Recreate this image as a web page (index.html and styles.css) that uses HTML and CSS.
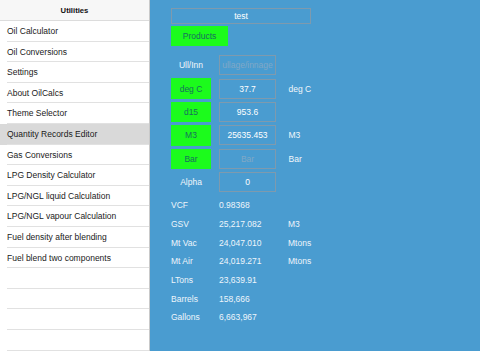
FILE: index.html
```html
<!DOCTYPE html>
<html lang="en">
<head>
    <meta charset="UTF-8">
    <title>OilCalcs - Quantity Records Editor</title>
    <link rel="stylesheet" href="styles.css">
</head>
<body>
    <div class="sidebar">
        <div class="side-head">Utilities</div>
        <div class="side-item">Oil Calculator</div>
        <div class="side-item">Oil Conversions</div>
        <div class="side-item">Settings</div>
        <div class="side-item">About OilCalcs</div>
        <div class="side-item">Theme Selector</div>
        <div class="side-item selected">Quantity Records Editor</div>
        <div class="side-item">Gas Conversions</div>
        <div class="side-item">LPG Density Calculator</div>
        <div class="side-item">LPG/NGL liquid Calculation</div>
        <div class="side-item">LPG/NGL vapour Calculation</div>
        <div class="side-item">Fuel density after blending</div>
        <div class="side-item">Fuel blend two components</div>
        <div class="side-item"></div>
        <div class="side-item"></div>
        <div class="side-item"></div>
        <div class="side-item"></div>
    </div>
    <div class="main">
        <input type="text" class="title-field" value="test" readonly>
        <button class="green products">Products</button>

        <div class="form">
            <div class="row">
                <span class="label">Ull/Inn</span>
                <input type="text" class="field" placeholder="ullage/innage" readonly>
            </div>
            <div class="row">
                <button class="green">deg C</button>
                <input type="text" class="field" value="37.7" readonly>
                <span class="unit">deg C</span>
            </div>
            <div class="row">
                <button class="green">d15</button>
                <input type="text" class="field" value="953.6" readonly>
            </div>
            <div class="row">
                <button class="green">M3</button>
                <input type="text" class="field" value="25635.453" readonly>
                <span class="unit">M3</span>
            </div>
            <div class="row">
                <button class="green">Bar</button>
                <input type="text" class="field" placeholder="Bar" readonly>
                <span class="unit">Bar</span>
            </div>
            <div class="row">
                <span class="label">Alpha</span>
                <input type="text" class="field" value="0" readonly>
            </div>
        </div>

        <div class="results">
            <div class="res"><span class="res-name">VCF</span><span class="res-val">0.98368</span></div>
            <div class="res"><span class="res-name">GSV</span><span class="res-val">25,217.082</span><span>M3</span></div>
            <div class="res"><span class="res-name">Mt Vac</span><span class="res-val">24,047.010</span><span>Mtons</span></div>
            <div class="res"><span class="res-name">Mt Air</span><span class="res-val">24,019.271</span><span>Mtons</span></div>
            <div class="res"><span class="res-name">LTons</span><span class="res-val">23,639.91</span></div>
            <div class="res"><span class="res-name">Barrels</span><span class="res-val">158,666</span></div>
            <div class="res"><span class="res-name">Gallons</span><span class="res-val">6,663,967</span></div>
        </div>
    </div>
</body>
</html>
```

FILE: styles.css
```css
body
{
    margin: 0;
    height: 351px;
    display: flex;
    overflow: hidden;
    font-family: "Liberation Sans", Arial, sans-serif;
    font-size: 8.5px;
}
.sidebar
{
    width: 149px;
    background: #fff;
    border-right: 1px solid #c9c9c9;
    flex-shrink: 0;
}
.side-head
{
    height: 20px;
    line-height: 21px;
    background: #f7f7f7;
    border-bottom: 1px solid #dcdcdc;
    text-align: center;
    font-weight: bold;
    font-size: 7.7px;
    color: #111;
}
.side-item
{
    height: 20.6px;
    box-sizing: border-box;
    line-height: 20px;
    padding-left: 7px;
    color: #1a1a1a;
    background: #fff;
    background-image: linear-gradient(#e1e1e1, #e1e1e1);
    background-size: calc(100% - 7px) 1px;
    background-position: 7px 100%;
    background-repeat: no-repeat;
}
.side-item.selected
{
    background-color: #d9d9d9;
}
.main
{
    flex: 1;
    background: #4a9cd0;
    padding: 8px 0 0 21px;
    display: flex;
    flex-direction: column;
    align-items: flex-start;
}
input
{
    font-family: inherit;
    font-size: 8.5px;
    background: transparent;
    color: #fff;
    text-align: center;
    border: 1px solid #7e9aae;
    box-sizing: border-box;
    padding: 0;
    outline: none;
}
input::placeholder
{
    color: #80a8c6;
}
.title-field
{
    width: 140px;
    height: 16px;
}
.green
{
    font-family: inherit;
    font-size: 8.5px;
    background: #1cfb1c;
    color: #17705f;
    border: none;
    padding: 0;
    width: 40px;
    height: 20.5px;
}
.products
{
    margin-top: 1.5px;
    width: 57px;
}
.form
{
    margin-top: 9px;
}
.row
{
    display: flex;
    align-items: center;
    height: 20.5px;
    margin-bottom: 2.9px;
}
.label
{
    width: 40px;
    text-align: center;
    color: #f2f7fb;
}
.field
{
    margin-left: 8px;
    width: 57px;
    height: 20px;
}
.unit
{
    margin-left: 12.5px;
    color: #f2f7fb;
}
.results
{
    margin-top: 1px;
    color: #eef5fb;
}
.res
{
    display: flex;
    height: 18.7px;
    line-height: 18.7px;
}
.res-name
{
    width: 48px;
}
.res-val
{
    width: 69px;
}
```
